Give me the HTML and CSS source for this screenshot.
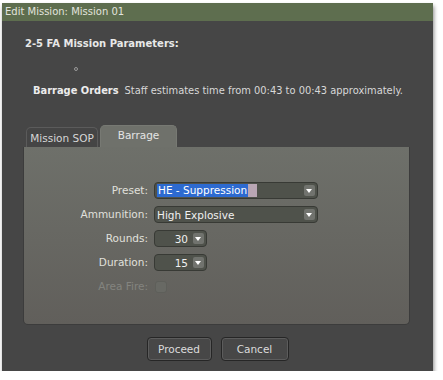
FILE: index.html
```html
<!DOCTYPE html>
<html>
<head>
<meta charset="utf-8">
<link rel="stylesheet" href="styles.css">
</head>
<body>
<div class="window">
  <div class="titlebar">Edit Mission: Mission 01</div>
  <div class="content">
    <div class="heading">2-5 FA Mission Parameters:</div>
    <div class="dot"></div>
    <div class="orders"><b>Barrage Orders</b><span class="est">Staff estimates time from 00:43 to 00:43 approximately.</span></div>
    <div class="tabs">
      <div class="tab">Mission SOP</div>
      <div class="tab active">Barrage</div>
    </div>
    <div class="panel">
      <div class="form">
        <label class="lbl">Preset:</label>
        <div class="select wide"><span class="val"><span class="sel">HE - Suppression</span><span class="caret"></span></span><span class="arrow"></span></div>
        <label class="lbl">Ammunition:</label>
        <div class="select wide"><span class="val">High Explosive</span><span class="arrow"></span></div>
        <label class="lbl">Rounds:</label>
        <div class="select small"><span class="val num">30</span><span class="arrow"></span></div>
        <label class="lbl">Duration:</label>
        <div class="select small"><span class="val num">15</span><span class="arrow"></span></div>
        <label class="lbl disabled">Area Fire:</label>
        <div class="check"></div>
      </div>
    </div>
    <div class="buttons">
      <button class="btn proceed">Proceed</button>
      <button class="btn cancel">Cancel</button>
    </div>
  </div>
</div>
</body>
</html>
```
FILE: styles.css
```css
* { box-sizing: border-box; }
body {
  margin: 0;
  background: #ffffff;
  font-family: "DejaVu Sans", sans-serif;
  font-size: 10px;
}
.window {
  margin: 3px 0 0 2px;
  width: 431px;
  height: 368px;
  background: #464646;
  box-shadow: 1px 3px 4px rgba(0,0,0,0.45);
  display: flex;
  flex-direction: column;
}
.titlebar {
  height: 18px;
  background: #5e6e4f;
  color: #e2e4de;
  padding-left: 3px;
  line-height: 17px;
  font-size: 10px;
}
.content {
  flex: 1;
  padding: 0 23px 0 21px;
  display: flex;
  flex-direction: column;
}
.heading {
  margin-top: 16px;
  color: #e8e8e8;
  font-weight: bold;
  font-size: 10px;
  line-height: 13px;
  padding-left: 2px;
}
.dot {
  margin: 17px 0 0 51px;
  width: 4px;
  height: 4px;
  border: 1px solid #9a9a9a;
  border-radius: 50%;
}
.orders {
  margin-top: 13px;
  padding-left: 10px;
  color: #d8d8d8;
  line-height: 13px;
  font-size: 9.9px;
}
.orders b { color: #ececec; }
.est { margin-left: 6px; }
.tabs {
  margin-top: 28px;
  display: flex;
  align-items: flex-end;
  padding-left: 3px;
  gap: 2px;
  height: 22px;
}
.tab {
  width: 72px;
  height: 20px;
  border: 1px solid #5b5b5b;
  border-bottom: none;
  border-radius: 5px 5px 0 0;
  background: #454545;
  color: #d6d6d6;
  text-align: center;
  line-height: 21px;
  font-size: 10.5px;
}
.tab.active {
  width: 77px;
  height: 22px;
  background: #6f716b;
  border-color: #777973;
  line-height: 19px;
  color: #e4e4e4;
}
.panel {
  height: 178px;
  background: linear-gradient(#6e706a, #615f5b);
  border-radius: 0 0 5px 5px;
  border: 1px solid #3c3c3c;
  border-top: none;
  padding-top: 35px;
}
.form {
  display: grid;
  grid-template-columns: 124px auto;
  column-gap: 6px;
  row-gap: 7px;
  align-items: center;
}
.lbl {
  text-align: right;
  color: #e0e0dc;
  font-size: 10.5px;
  height: 17px;
  line-height: 17px;
}
.lbl.disabled { color: #83847f; }
.select {
  height: 17px;
  background: #4f524b;
  border: 1px solid #383a35;
  border-radius: 4px;
  display: flex;
  align-items: center;
  padding: 0 2px 0 2px;
  color: #f0f0f0;
  font-size: 10.5px;
}
.select.wide { width: 164px; }
.select.small { width: 53px; }
.val { flex: 1; display: flex; align-items: center; }
.val.num { justify-content: flex-end; padding-right: 5px; }
.sel {
  background: #2d6ad0;
  color: #ffffff;
  padding: 0 1px;
  line-height: 13px;
}
.caret {
  width: 9px;
  height: 13px;
  background: #b9a6b4;
}
.arrow {
  width: 11px;
  height: 11px;
  background: #71736e;
  border-radius: 2px;
  position: relative;
}
.arrow::after {
  content: "";
  position: absolute;
  left: 2px;
  top: 4px;
  border-left: 3.5px solid transparent;
  border-right: 3.5px solid transparent;
  border-top: 4px solid #ffffff;
}
.check {
  width: 12px;
  height: 12px;
  margin-left: 1px;
  border: 1px solid #5e5f5a;
  background: #686964;
  border-radius: 3px;
}
.buttons {
  display: flex;
  justify-content: center;
  gap: 9px;
  margin-top: 12px;
  padding-left: 2px;
}
.btn {
  height: 24px;
  background: #474747;
  border: 1px solid #262626;
  box-shadow: inset 0 0 0 1px #5c5c5c;
  border-radius: 4px;
  color: #dcdcdc;
  font-family: "DejaVu Sans", sans-serif;
  font-size: 10.5px;
  padding: 0;
}
.btn.proceed { width: 65px; }
.btn.cancel { width: 68px; }
```
